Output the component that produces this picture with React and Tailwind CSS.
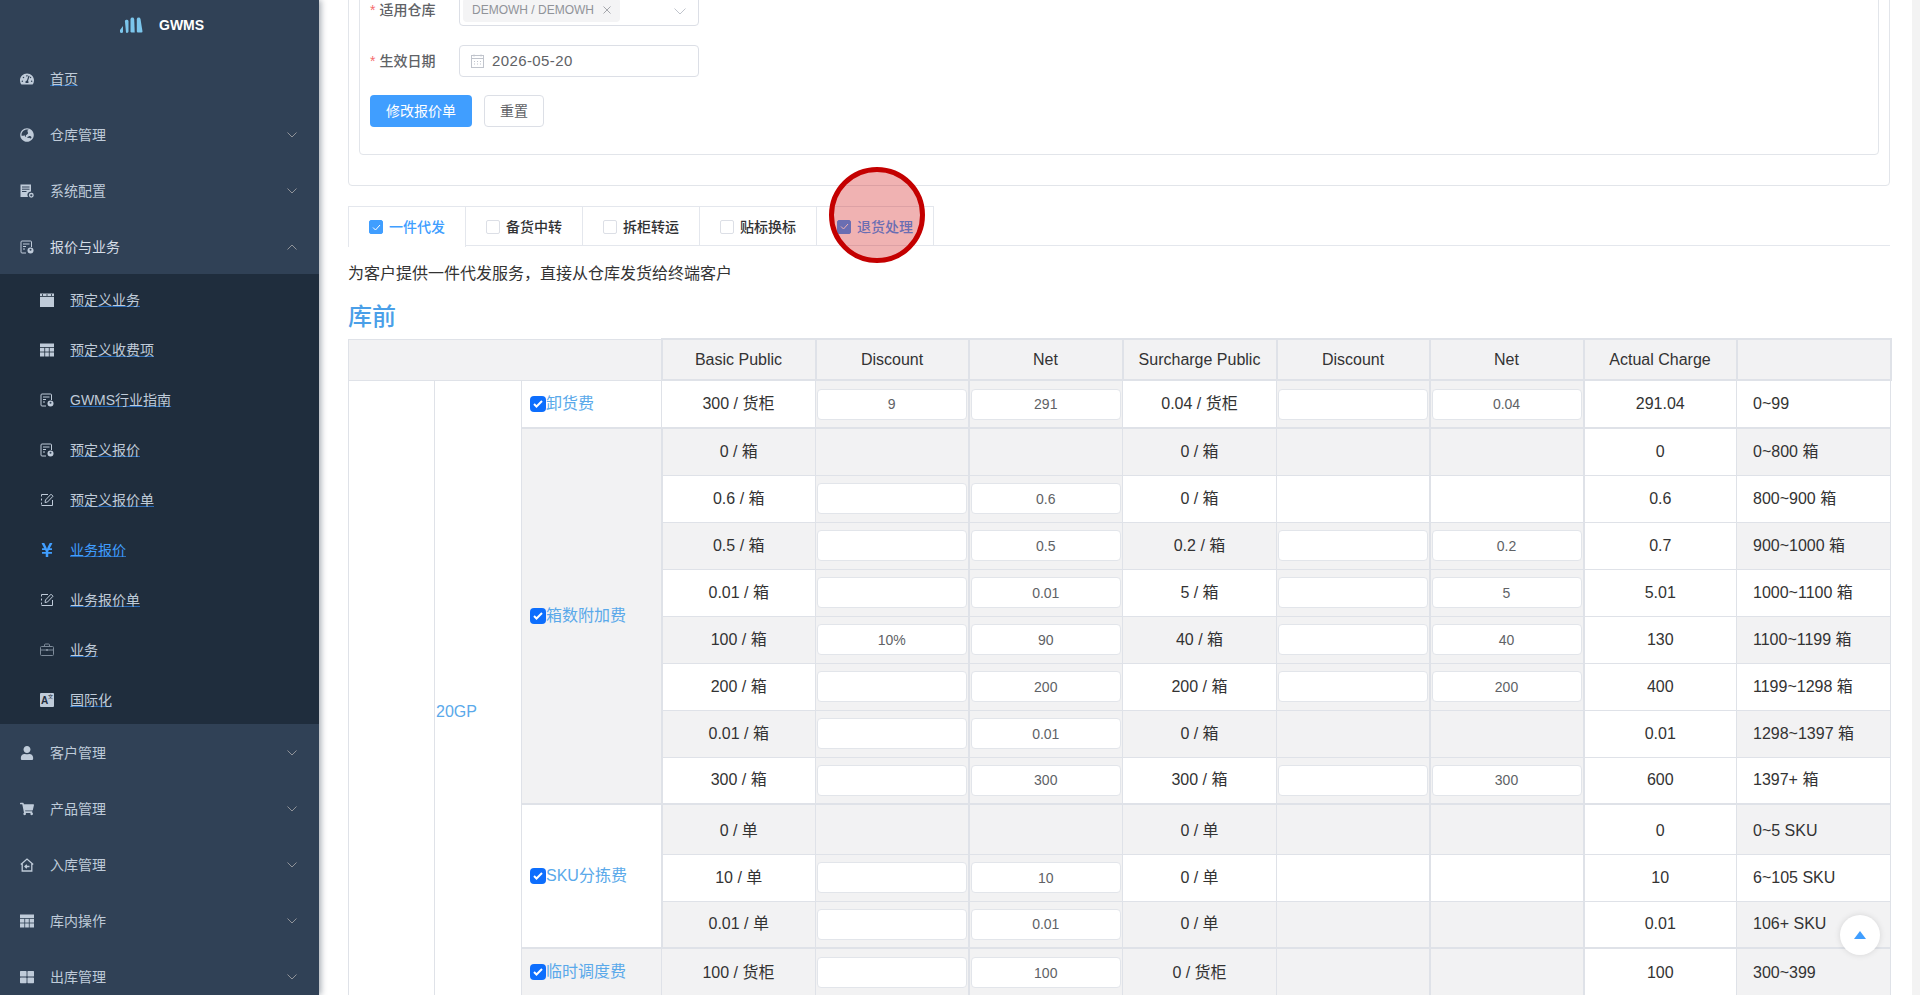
import React from 'react';
import { FaTachometerAlt, FaGlobeAsia, FaYenSign, FaUser, FaShoppingCart, FaThLarge } from 'react-icons/fa';

const DocUser = () => (
  <svg width="14" height="14" viewBox="0 0 14 14" fill="none" stroke="currentColor" strokeWidth="1">
    <path d="M6 13H2a1 1 0 0 1-1-1V2a1 1 0 0 1 1-1h8.500a1 1 0 0 1 1 1v5" />
    <path d="M3 4h6.500M3 6.500h3M3 9h2" />
    <circle cx="10.500" cy="10.500" r="3" fill="currentColor" stroke="none" />
    <circle cx="10.500" cy="9.800" r="1" fill="#304156" stroke="none" />
  </svg>
);

const DocGear = () => (
  <svg width="14" height="14" viewBox="0 0 14 14">
    <path d="M0.500 0.500h10.500v7a3.500 3.500 0 0 0-3 5.500H0.500z" fill="currentColor" />
    <path d="M2 3h7.500M2 5.200h7.500M2 7.500h4.500" stroke="#304156" strokeWidth="1" />
    <circle cx="11.300" cy="11.300" r="1.800" fill="none" stroke="currentColor" strokeWidth="1.300" />
  </svg>
);

const DocPen = () => (
  <svg width="14" height="14" viewBox="0 0 14 14" fill="none" stroke="currentColor" strokeWidth="1">
    <path d="M8 1.500H1.500v2M1.500 5.500v2M1.500 9.500v2M1.500 12.500h11V7" />
    <path d="M5 9.500l.500-2.500L11 1.200l2 2L7.500 9z" />
  </svg>
);

const Briefcase = () => (
  <svg width="14" height="14" viewBox="0 0 14 14" fill="none" stroke="currentColor" strokeWidth="1">
    <rect x="0.500" y="3.500" width="13" height="9" rx="1" />
    <path d="M4.500 3.500V2a1 1 0 0 1 1-1h3a1 1 0 0 1 1 1v1.500M.5 7h13" />
    <rect x="6" y="6" width="2" height="2" fill="currentColor" stroke="none" />
  </svg>
);

const HomeIn = () => (
  <svg width="14" height="14" viewBox="0 0 14 14" fill="none" stroke="currentColor" strokeWidth="1.300">
    <path d="M.8 6.500L7 1l6.200 5.500M2.200 5.500V13h9.600V5.500" />
    <path d="M9.500 8.500H5M6.800 6.800L5 8.500l1.800 1.700" />
  </svg>
);

const SolidTable = ({ lines }) => (
  <svg width="14" height="14" viewBox="0 0 14 14">
    <rect x="0" y="0.500" width="14" height="13" fill="currentColor" />
    <path d="M0 4.500h14M0 9h14M4.700 4.500V14M9.300 4.500V14" stroke={lines} strokeWidth="0.800" />
  </svg>
);

const SolidCalendar = ({ lines }) => (
  <svg width="14" height="14" viewBox="0 0 14 14">
    <rect x="0" y="0.500" width="14" height="13.500" fill="currentColor" />
    <path d="M2.500 1v2M7 1v2M11.500 1v2M0 3.500h14" stroke={lines} strokeWidth="0.800" />
  </svg>
);

const Translate = () => (
  <span className="relative block w-[14px] h-[14px] bg-[#bfcbd9] rounded-[1px] text-[#1f2d3d] text-[10px] leading-[15px] font-bold pl-[1px]">
    A<span className="absolute right-[1px] top-[-1px] text-[5px] leading-[8px] font-normal">文</span>
  </span>
);

const Chevron = ({ up }) => (
  <svg width="10" height="6" viewBox="0 0 10 6" fill="none" stroke="#909399" strokeWidth="1" className={up ? 'rotate-180' : ''}>
    <path d="M.5.5L5 5l4.500-4.500" />
  </svg>
);

const Logo = () => (
  <svg width="23" height="16" viewBox="0 0 23 16" fill="#7cc6ec">
    <path d="M0 13l3-4v5.500a1.500 1.500 0 0 1-3 0z" />
    <path d="M5 5a1.800 1.800 0 0 1 3.500-1v10.500a1.500 1.500 0 0 1-2.500 1z" />
    <path d="M10.500 2a1.900 1.900 0 0 1 3.700 0l.5 13.500h-3a1.200 1.200 0 0 1-1.200-1.200z" />
    <path d="M16.800 2a1.900 1.900 0 0 1 3.700 0l2 12.500a1 1 0 0 1-1 1H18a1.200 1.200 0 0 1-1.200-1.200z" />
  </svg>
);

const topMenu = [
  { label: '首页', icon: <FaTachometerAlt size={14} />, plain: true },
  { label: '仓库管理', icon: <FaGlobeAsia size={14} /> },
  { label: '系统配置', icon: <DocGear /> },
];

const subMenu = [
  { label: '预定义业务', icon: <SolidCalendar lines="#1f2d3d" /> },
  { label: '预定义收费项', icon: <SolidTable lines="#1f2d3d" /> },
  { label: 'GWMS行业指南', icon: <DocUser /> },
  { label: '预定义报价', icon: <DocUser /> },
  { label: '预定义报价单', icon: <DocPen /> },
  { label: '业务报价', icon: <FaYenSign size={16} className="-ml-[1px]" />, active: true },
  { label: '业务报价单', icon: <DocPen /> },
  { label: '业务', icon: <Briefcase />, dim: true },
  { label: '国际化', icon: <Translate /> },
];

const bottomMenu = [
  { label: '客户管理', icon: <FaUser size={14} /> },
  { label: '产品管理', icon: <FaShoppingCart size={14} /> },
  { label: '入库管理', icon: <HomeIn /> },
  { label: '库内操作', icon: <SolidTable lines="#304156" /> },
  { label: '出库管理', icon: <FaThLarge size={14} /> },
];

const MenuRow = ({ item }) => (
  <div className="h-[56px] flex items-center pt-[2px] pl-5 pr-[22px] text-sm text-[#bfcbd9]">
    <span className="w-[14px] mr-4">{item.icon}</span>
    <span className={item.plain ? 'underline decoration-[#2b6cb8]' : ''}>{item.label}</span>
    {!item.plain && <span className="ml-auto"><Chevron /></span>}
  </div>
);

const Sidebar = () => (
  <aside className="w-[319px] shrink-0 bg-[#304156] shadow-[2px_0_6px_rgba(0,21,41,0.35)] z-10 overflow-hidden">
    <div className="h-[50px] flex items-center pl-[120px] gap-4">
      <Logo />
      <span className="text-sm font-bold text-white">GWMS</span>
    </div>
    {topMenu.map(item => <MenuRow key={item.label} item={item} />)}
    <div className="h-[56px] flex items-center pt-[2px] pl-5 pr-[22px] text-sm text-[#d5dde6]">
      <span className="w-[14px] mr-4 text-[#bfcbd9]"><DocUser /></span>
      <span>报价与业务</span>
      <span className="ml-auto"><Chevron up /></span>
    </div>
    <div className="bg-[#1f2d3d]">
      {subMenu.map(item => (
        <div key={item.label} className={`h-[50px] flex items-center pt-[1px] pl-10 text-sm ${item.active ? 'text-[#409eff]' : 'text-[#bfcbd9]'}`}>
          <span className={`w-[14px] mr-4 ${item.dim ? 'text-[#7d8a99]' : ''}`}>{item.icon}</span>
          <span className="underline decoration-[#2b6cb8]">{item.label}</span>
        </div>
      ))}
    </div>
    {bottomMenu.map(item => <MenuRow key={item.label} item={item} />)}
  </aside>
);

const tabs = [
  { label: '一件代发', checked: true, active: true },
  { label: '备货中转' },
  { label: '拆柜转运' },
  { label: '贴标换标' },
  { label: '退货处理', checked: true, active: true },
];

const groups = [
  {
    name: '卸货费',
    white: true,
    rows: [['300 / 货柜', '9', '291', '0.04 / 货柜', '', '0.04', '291.04', '0~99']],
  },
  {
    name: '箱数附加费',
    rows: [
      ['0 / 箱', null, null, '0 / 箱', null, null, '0', '0~800 箱'],
      ['0.6 / 箱', '', '0.6', '0 / 箱', null, null, '0.6', '800~900 箱'],
      ['0.5 / 箱', '', '0.5', '0.2 / 箱', '', '0.2', '0.7', '900~1000 箱'],
      ['0.01 / 箱', '', '0.01', '5 / 箱', '', '5', '5.01', '1000~1100 箱'],
      ['100 / 箱', '10%', '90', '40 / 箱', '', '40', '130', '1100~1199 箱'],
      ['200 / 箱', '', '200', '200 / 箱', '', '200', '400', '1199~1298 箱'],
      ['0.01 / 箱', '', '0.01', '0 / 箱', null, null, '0.01', '1298~1397 箱'],
      ['300 / 箱', '', '300', '300 / 箱', '', '300', '600', '1397+ 箱'],
    ],
  },
  {
    name: 'SKU分拣费',
    white: true,
    rows: [
      ['0 / 单', null, null, '0 / 单', null, null, '0', '0~5 SKU'],
      ['10 / 单', '', '10', '0 / 单', null, null, '10', '6~105 SKU'],
      ['0.01 / 单', '', '0.01', '0 / 单', null, null, '0.01', '106+ SKU'],
    ],
  },
  {
    name: '临时调度费',
    rows: [['100 / 货柜', '', '100', '0 / 货柜', null, null, '100', '300~399']],
  },
];

const headers = ['Basic Public', 'Discount', 'Net', 'Surcharge Public', 'Discount', 'Net', 'Actual Charge', ''];

const rowHeight = (groupIndex, rowIndex) => {
  if (rowIndex > 0 || groupIndex === 1) return 'h-[47px]';
  if (groupIndex === 2) return 'h-[50px]';
  return 'h-[48px]';
};

const rowPad = (groupIndex, rowIndex) => {
  if (rowIndex > 0 || groupIndex < 2) return '';
  return groupIndex === 2 ? 'pt-[3px]' : 'pt-[1px]';
};

const InputCell = ({ value, className }) => (
  <td className={`bg-[#f2f2f3] px-[1px] border border-[#dfe2e8] ${className}`}>
    <input
      readOnly
      value={value}
      className="block w-full h-[31px] bg-white border border-[#e2e5ea] rounded-[4px] text-center text-sm text-[#606266] outline-none"
    />
  </td>
);

const PriceRow = ({ row, rowIndex, group, groupIndex }) => {
  const multi = group.rows.length > 1;
  // the single rows and every other row of a tier group carry the grey stripe
  const striped = groupIndex > 0 && (!multi || rowIndex % 2 === 0);
  const bg = striped ? 'bg-[#f2f2f3]' : 'bg-white';
  const last = rowIndex === group.rows.length - 1 ? 'border-b-2' : '';
  const pad = rowPad(groupIndex, rowIndex);
  const valueCell = (value, extra) =>
    value === null
      ? <td className={`${bg} border border-[#dfe2e8] ${last} ${extra}`} />
      : <InputCell value={value} className={`${last} ${extra} ${pad}`} />;

  return (
    <tr className={rowHeight(groupIndex, rowIndex)}>
      {rowIndex === 0 && groupIndex === 0 && (
        <>
          <td rowSpan={14} className="border border-[#dfe2e8]" />
          <td rowSpan={14} className="border border-[#dfe2e8] pl-[1px] text-[#5aa9ea]">20GP</td>
        </>
      )}
      {rowIndex === 0 && (
        <td
          rowSpan={group.rows.length}
          className={`border border-[#dfe2e8] border-b-2 pl-2 ${group.white ? 'bg-white' : 'bg-[#f2f2f3]'}`}
        >
          <span className="flex items-center text-[#5aa9ea]">
            <span className="w-4 h-4 rounded-[4px] bg-[#0d6efd] flex items-center justify-center shrink-0">
              <svg width="10" height="8" viewBox="0 0 10 8" fill="none" stroke="#fff" strokeWidth="2"><path d="M1 4l2.500 2.500L9 1" /></svg>
            </span>
            {group.name}
          </span>
        </td>
      )}
      <td className={`${bg} border border-[#dfe2e8] ${last} ${multi ? 'border-l-2' : ''} ${pad} text-center text-[#333]`}>{row[0]}</td>
      {valueCell(row[1], 'border-r-2')}
      {valueCell(row[2], '')}
      <td className={`${bg} border border-[#dfe2e8] ${last} ${pad} text-center text-[#333]`}>{row[3]}</td>
      {valueCell(row[4], 'border-r-2')}
      {valueCell(row[5], 'border-r-2')}
      <td className={`bg-white border border-[#dfe2e8] ${last} ${pad} text-center text-[#333]`}>{row[6]}</td>
      <td className={`${bg} border border-[#dfe2e8] ${last} ${pad} pl-4 text-[#333] whitespace-nowrap`}>{row[7]}</td>
    </tr>
  );
};

const PriceTable = () => (
  <table className="table-fixed border-collapse w-[1542px] text-base">
    <colgroup>
      <col className="w-[86px]" />
      <col className="w-[87px]" />
      <col className="w-[140px]" />
      <col className="w-[154px]" />
      <col className="w-[153px]" />
      <col className="w-[154px]" />
      <col className="w-[154px]" />
      <col className="w-[153px]" />
      <col className="w-[154px]" />
      <col className="w-[153px]" />
      <col className="w-[154px]" />
    </colgroup>
    <thead>
      <tr className="h-[41px] bg-[#f2f2f3]">
        <th colSpan={3} className="border border-[#dfe2e8]" />
        {headers.map((h, i) => (
          <th key={i} className="border-2 border-[#dfe2e8] font-normal text-[#333] text-center whitespace-nowrap">{h}</th>
        ))}
      </tr>
    </thead>
    <tbody>
      {groups.map((group, groupIndex) =>
        group.rows.map((row, rowIndex) => (
          <PriceRow key={`${groupIndex}-${rowIndex}`} row={row} rowIndex={rowIndex} group={group} groupIndex={groupIndex} />
        ))
      )}
      <tr className="h-[47px]"><td colSpan={9} className="border border-[#dfe2e8]" /></tr>
    </tbody>
  </table>
);

const App = () => (
  <div className="relative flex h-[995px] overflow-hidden bg-white font-['Liberation_Sans','Noto_Sans_CJK_SC',sans-serif]">
    <Sidebar />
    <main className="flex-1 min-w-0 overflow-hidden pl-[29px] pr-[22px]">
      <div className="-mt-[39px] border border-[#e2e5ea] rounded-[4px] p-[10px] pb-[30px]">
        <div className="border border-[#e2e5ea] rounded-[4px] pt-[21px] pb-[27px] px-[10px]">
          <div className="flex items-center mb-[19px]">
            <label className="w-[89px] text-sm font-medium text-[#606266]"><span className="text-[#f56c6c] mr-[4px]">*</span>适用仓库</label>
            <div className="w-[240px] h-[32px] border border-[#dcdfe6] rounded-[4px] flex items-center pl-[3px] pr-[12px]">
              <span className="flex items-center h-[24px] bg-[#f4f4f5] rounded-[4px] px-[9px] text-xs text-[#909399] whitespace-nowrap">
                DEMOWH / DEMOWH
                <svg width="8" height="8" viewBox="0 0 8 8" stroke="#909399" strokeWidth="0.800" className="ml-[9px]"><path d="M.5.5l7 7M7.500.5l-7 7" /></svg>
              </span>
              <svg width="12" height="7" viewBox="0 0 12 7" fill="none" stroke="#c0c4cc" strokeWidth="1" className="ml-auto mt-[2px]"><path d="M.5.5L6 6 11.500.5" /></svg>
            </div>
          </div>
          <div className="flex items-center mb-[18px]">
            <label className="w-[89px] text-sm font-medium text-[#606266]"><span className="text-[#f56c6c] mr-[4px]">*</span>生效日期</label>
            <div className="w-[240px] h-[32px] border border-[#dcdfe6] rounded-[4px] flex items-center pl-[11px] text-[15px] tracking-[0.4px] text-[#606266]">
              <svg width="13" height="14" viewBox="0 0 13 14" fill="none" stroke="#c0c4cc" strokeWidth="1" className="mr-[8px]">
                <rect x="0.500" y="1.500" width="12" height="12" />
                <path d="M.5 4.500h12M3 .5v2M10 .5v2M3 7.500h1M6 7.500h1M9 7.500h1M3 10h1M6 10h1M9 10h1" />
              </svg>
              2026-05-20
            </div>
          </div>
          <div className="flex gap-3">
            <button className="w-[102px] h-[32px] bg-[#409eff] rounded-[4px] text-sm text-white">修改报价单</button>
            <button className="w-[60px] h-[32px] border border-[#dcdfe6] rounded-[4px] text-sm text-[#606266]">重置</button>
          </div>
        </div>
      </div>

      <div className="mt-[20px] h-[40px] flex border-b border-[#e4e7ed]">
        {tabs.map((tab, i) => (
          <div
            key={tab.label}
            className={`h-[40px] flex items-center pl-[20px] border-t border-r border-[#e4e7ed] text-sm font-medium ${i === 0 ? 'w-[118px] border-l bg-white h-[41px]' : 'w-[117px]'} ${tab.active ? 'text-[#409eff]' : 'text-[#303133]'}`}
          >
            <span className={`w-[14px] h-[14px] rounded-[2px] border mr-[6px] flex items-center justify-center ${tab.checked ? 'bg-[#409eff] border-[#409eff]' : 'bg-white border-[#dcdfe6]'}`}>
              {tab.checked && <svg width="9" height="7" viewBox="0 0 9 7" fill="none" stroke="#fff" strokeWidth="1"><path d="M1 3.500l2.500 2.500L8 1" /></svg>}
            </span>
            {tab.label}
          </div>
        ))}
      </div>

      <p className="mt-[16px] text-base leading-[24px] text-[#333]">{'为客户提供一件代发服务\uFF0C直接从仓库发货给终端客户'}</p>
      <h3 className="mt-[15px] text-2xl leading-[32px] font-medium text-[#4a9fe8]">库前</h3>
      <div className="mt-[5px]">
        <PriceTable />
      </div>
    </main>
    <div className="w-2 shrink-0 bg-[#f3f3f3]" />

    <div className="absolute left-[829px] top-[167px] w-[96px] h-[96px] rounded-full border-[5px] border-[#c40000] bg-[rgba(204,0,0,0.3)]" />
    <button className="absolute left-[1840px] top-[915px] w-[40px] h-[40px] rounded-full bg-white shadow-[0_0_6px_rgba(0,0,0,0.12)] flex items-center justify-center">
      <svg width="12" height="8" viewBox="0 0 12 8" fill="#409eff"><path d="M6 0l6 8H0z" /></svg>
    </button>
  </div>
);

export default App;
